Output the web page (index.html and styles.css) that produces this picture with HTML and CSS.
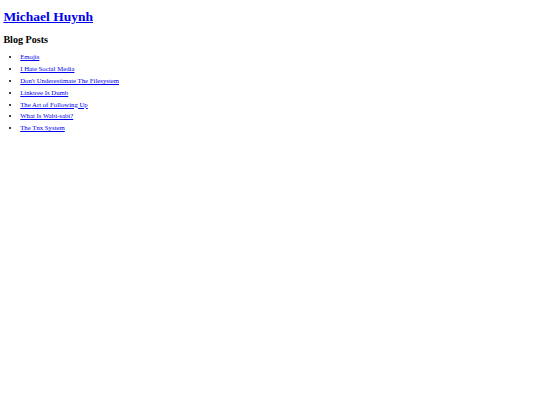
FILE: index.html
```html
<!DOCTYPE html>
<html>
<head>
<meta charset="utf-8">
<title>Michael Huynh</title>
<link rel="stylesheet" href="styles.css">
</head>
<body>
<h1 class="site-title"><a href="#">Michael Huynh</a></h1>
<h2 class="section-title">Blog Posts</h2>
<ul class="post-list">
<li><a href="#">Emojis</a></li>
<li><a href="#">I Hate Social Media</a></li>
<li><a href="#">Don't Underestimate The Filesystem</a></li>
<li><a href="#">Linktree Is Dumb</a></li>
<li><a href="#">The Art of Following Up</a></li>
<li><a href="#">What Is Wabi-sabi?</a></li>
<li><a href="#">The Tnx System</a></li>
</ul>
</body>
</html>
```
FILE: styles.css
```css
html {
  background: #ffffff;
}
body {
  margin: 0 3.375px 3.375px;
  font-family: "Liberation Serif", "Times New Roman", serif;
  font-size: 6.75px;
  color: #000000;
}
a {
  color: #0000ee;
}
.site-title {
  font-size: 13.5px;
  font-weight: bold;
  margin: 9px 0;
}
.section-title {
  font-size: 10.125px;
  font-weight: bold;
  margin: 8.4px 0;
}
.post-list {
  margin: 6.75px 0;
  padding-left: 16.875px;
}
.post-list li {
  line-height: 7.8px;
  margin-bottom: 4px;
}
```
